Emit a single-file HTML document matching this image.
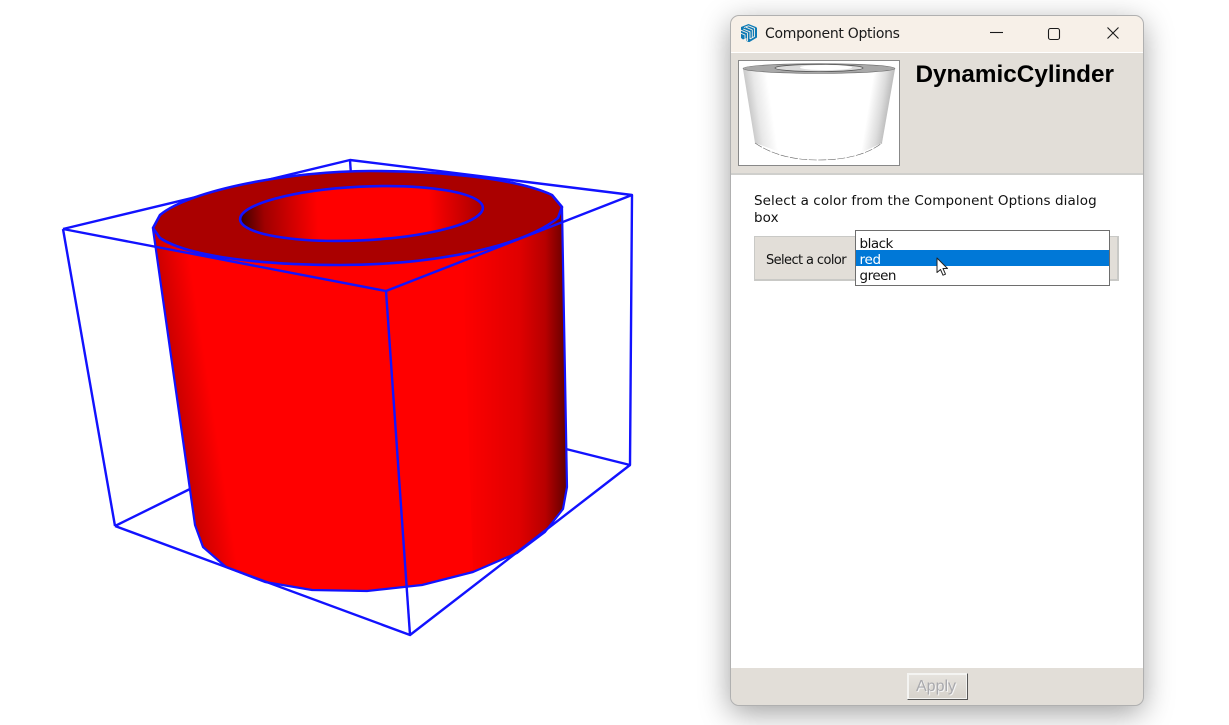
<!DOCTYPE html>
<html><head><meta charset="utf-8"><title>Component Options</title>
<style>
html,body{margin:0;padding:0;background:#fff;width:1229px;height:725px;overflow:hidden}
.a{position:absolute}
#win{left:730px;top:15px;width:413px;height:690px;border-radius:9px;background:#fff;box-shadow:0 8px 30px rgba(0,0,0,.38)}
#frame{left:730px;top:15px;width:412px;height:689px;border:1px solid #b0b0b0;border-radius:9px;pointer-events:none}
#tb{left:730px;top:15px;width:413px;height:37px;background:#f7f0e8;border-radius:9px 9px 0 0}
#hd{left:731px;top:53px;width:412px;height:120px;background:#e2ded8}
#sep{left:731px;top:173px;width:412px;height:2px;background:#cfcfcc}
#ft{left:731px;top:668px;width:412px;height:37px;background:#e2ded8;border-radius:0 0 8px 8px}
.t{white-space:nowrap;color:#000}
</style></head><body>
<svg class="a" style="left:0;top:0" width="725" height="725" viewBox="0 0 725 725">
<defs>
<linearGradient id="lg" gradientUnits="userSpaceOnUse" x1="153" y1="235" x2="185" y2="230"><stop offset="0" stop-color="#cc0000"/><stop offset="1" stop-color="#cc0000" stop-opacity="0"/></linearGradient>
<linearGradient id="rg" gradientUnits="userSpaceOnUse" x1="462" y1="300" x2="566" y2="300"><stop offset="0" stop-color="#ff0000"/><stop offset=".55" stop-color="#e00000"/><stop offset=".8" stop-color="#b80000"/><stop offset="1" stop-color="#640000"/></linearGradient>
<linearGradient id="ig" gradientUnits="userSpaceOnUse" x1="240" y1="0" x2="483" y2="0"><stop offset="0" stop-color="#3a0000"/><stop offset=".1" stop-color="#a00000"/><stop offset=".32" stop-color="#ff0000"/><stop offset=".78" stop-color="#ff0000"/><stop offset="1" stop-color="#a80000"/></linearGradient>
</defs>
<g fill="none" stroke="#1212ff" stroke-width="2.4" stroke-linejoin="round">
<path d="M63 229L350 160L632 195L630 465L566 449"/>
<path d="M350 160L351 175"/>
<path d="M115 526L192 488"/>
<path d="M63 229L115 526"/>
</g>
<path d="M153 229L195 525L203 547L226 567L265 582L312 590L367 591L422 585L473 572L517 553L545 532L563 509L567 487L562 207Z" fill="#ff0000"/>
<path d="M153 229L195 525L203 547L226 567L265 582L312 590L367 591L422 585L473 572L517 553L545 532L563 509L567 487L562 207Z" fill="url(#lg)"/>
<path d="M462 230L473 572L517 553L545 532L563 509L567 487L562 207Z" fill="url(#rg)"/>
<path d="M153 229L195 525L203 547L226 567L265 582L312 590L367 591L422 585L473 572L517 553L545 532L563 509L567 487L562 207" fill="none" stroke="#1212ff" stroke-width="2.2" stroke-linejoin="round"/>
<path d="M153 228L160 215C190 190 290 171 370 171C440 171 515 178 552 195L562 207L558 218C520 248 430 265 340 265C270 265 190 258 160 238Z" fill="#aa0000" stroke="#1212ff" stroke-width="2.6" stroke-linejoin="round"/>
<ellipse cx="361.5" cy="213.500" rx="121.500" ry="26.800" transform="rotate(-2.8 361.5 213.500)" fill="url(#ig)" stroke="#1212ff" stroke-width="2.6"/>
<g fill="none" stroke="#1212ff" stroke-width="2.4" stroke-linejoin="round">
<path d="M63 229L386 291L632 195"/>
<path d="M386 291L410 635"/>
<path d="M115 526L410 635L630 465"/>
</g>
</svg>

<div class="a" id="win"></div>
<div class="a" id="tb"></div>
<div class="a" id="hd"></div>
<div class="a" id="sep"></div>
<div class="a" id="ft"></div>
<div class="a" id="frame"></div>

<svg class="a" style="left:739px;top:23px" width="20" height="20" viewBox="0 0 20 20">
<path d="M9.500 1L17 4L18 5V14.500L10.500 19H9.500L7.500 18V15L4 16.500L2 15V5.500L2 4Z" fill="#0e7ab5"/>
<path d="M5 4.500L9.500 2.800L15.500 5.300V13.500L11 16M1.800 7.200L8.500 10V18M1.800 10.200L6 12V16.500M4.200 6L11 8.800V16M7 4.200L13.300 7V14.500" fill="none" stroke="#f7f0e8" stroke-width=".9"/>
</svg>
<div class="a t" style="left:765px;top:26px;font:14px/17px 'DejaVu Sans',sans-serif;letter-spacing:-.3px;color:#1a1a1a">Component Options</div>
<svg class="a" style="left:985px;top:22px" width="140" height="22" viewBox="0 0 140 22" fill="none" stroke="#1a1a1a" stroke-width="1.100">
<path d="M5 10.500H18"/>
<rect x="63.500" y="6.500" width="11" height="11" rx="2"/>
<path d="M122.500 5.500L133.500 16.500M133.500 5.500L122.500 16.500"/>
</svg>

<svg class="a" style="left:738px;top:60px" width="162" height="106" viewBox="0 0 162 106">
<defs>
<linearGradient id="t1" gradientUnits="userSpaceOnUse" x1="5" y1="40" x2="32" y2="36"><stop offset="0" stop-color="#b8b8b8"/><stop offset=".5" stop-color="#e8e8e8"/><stop offset="1" stop-color="#fff"/></linearGradient>
<linearGradient id="t2" gradientUnits="userSpaceOnUse" x1="157" y1="40" x2="132" y2="36"><stop offset="0" stop-color="#a8a8a8"/><stop offset=".5" stop-color="#dcdcdc"/><stop offset="1" stop-color="#fff"/></linearGradient>
</defs>
<rect x=".5" y=".5" width="161" height="105" fill="#fff" stroke="#888"/>
<path d="M5 9L17 83Q42 100 80 100Q122 100 144 83L157 9L82 4Z" fill="#fff"/>
<path d="M5 9L17 83L50 95L36 9Z" fill="url(#t1)"/>
<path d="M157 9L144 83L118 95L118 9Z" fill="url(#t2)"/>
<path d="M17 83Q42 100 80 100Q122 100 144 83" fill="none" stroke="#666" stroke-width=".6" stroke-dasharray="8 1.500"/>
<ellipse cx="81" cy="8.500" rx="76" ry="4.800" fill="#a8a8a8" stroke="#666" stroke-width=".6"/>
<ellipse cx="81" cy="8" rx="44" ry="3.600" fill="#dcdcdc" stroke="#555" stroke-width=".8"/>
<ellipse cx="88" cy="7.500" rx="26" ry="2.600" fill="#fff"/>
</svg>

<div class="a t" style="left:915.500px;top:60px;font:bold 24.300px/30px 'Liberation Sans',sans-serif">DynamicCylinder</div>

<div class="a t" style="left:754px;top:193px;font:13.500px/17px 'DejaVu Sans',sans-serif;letter-spacing:.09px;color:#111">Select a color from the Component Options dialog<br>box</div>

<div class="a" style="left:754px;top:236px;width:362px;height:42px;background:#e2ded8;border:1px solid #c9c9c6;border-width:1px 2px 2px 1px"></div>
<div class="a t" style="left:766px;top:253px;font:13px/16px 'DejaVu Sans',sans-serif;letter-spacing:-.6px;color:#111">Select a color</div>
<div class="a" style="left:855px;top:230px;width:253px;height:54px;background:#fff;border:1px solid #6e6e6e"></div>
<div class="a" style="left:856px;top:250px;width:253px;height:16px;background:#0078d7"></div>
<div class="a t" style="left:859.500px;top:236px;font:13.500px/16px 'DejaVu Sans',sans-serif;letter-spacing:-.5px;color:#111">black</div>
<div class="a t" style="left:859.500px;top:252px;font:13.500px/16px 'DejaVu Sans',sans-serif;letter-spacing:-.3px;color:#fff">red</div>
<div class="a t" style="left:859.500px;top:268px;font:13.500px/16px 'DejaVu Sans',sans-serif;letter-spacing:-.5px;color:#111">green</div>
<svg class="a" style="left:935px;top:256px" width="16" height="22" viewBox="0 0 16 22">
<path d="M2 2V16.500L5.500 13.500L8 19.200L10.500 18.200L8 12.500H12.500Z" fill="#fff" stroke="#222" stroke-width="1" stroke-linejoin="round"/>
</svg>

<div class="a" style="left:907px;top:673px;width:59px;height:25px;background:linear-gradient(#e6e3de,#d6d2cb);border:1px solid;border-color:#f4f4f2 #555 #555 #f4f4f2;box-shadow:inset 1px 1px 0 #f4f4f2,inset -1px -1px 0 #f4f4f2"></div>
<div class="a t" style="left:916px;top:677px;font:16px/19px 'Liberation Sans',sans-serif;color:#a9a9ad;text-shadow:1px 1px 0 #f5f5f5">Apply</div>
</body></html>
